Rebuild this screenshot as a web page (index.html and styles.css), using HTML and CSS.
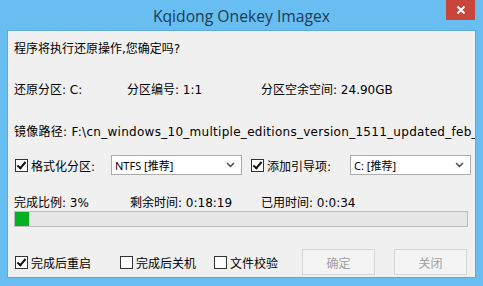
FILE: index.html
```html
<!doctype html>
<html>
	<head>
		<meta charset="UTF-8">
		<link rel="stylesheet" href="styles.css">
	</head>
	<body>
		<div class="window">
			<div class="titlebar">
				<span class="title">Kqidong Onekey Imagex</span>
				<div class="close">
					<svg width="10" height="10" viewBox="0 0 10 10"><path d="M1.5 1.5 L8.5 8.5 M8.5 1.5 L1.5 8.5" stroke="#fff" stroke-width="2"/></svg>
				</div>
			</div>

			<div class="panel">
				<div class="row r1">程序将执行还原操作,您确定吗?</div>

				<div class="row r2">
					<span class="c1">还原分区: C:</span>
					<span class="c2">分区编号: 1:1</span>
					<span>分区空余空间: 24.90GB</span>
				</div>

				<div class="row r3">镜像路径: F:\cn_windows_10_multiple_editions_version_1511_updated_feb_</div>

				<!-- format / boot options -->
				<div class="row r4">
					<span class="check on"></span>
					<span class="label-a">格式化分区:</span>
					<div class="select sel-a">
						<span>NTFS [推荐]</span>
						<svg width="9" height="6" viewBox="0 0 9 6"><path d="M1 1 L4.5 4.5 L8 1" fill="none" stroke="#444" stroke-width="1.4"/></svg>
					</div>
					<span class="check on"></span>
					<span class="label-b">添加引导项:</span>
					<div class="select sel-b">
						<span>C: [推荐]</span>
						<svg width="9" height="6" viewBox="0 0 9 6"><path d="M1 1 L4.5 4.5 L8 1" fill="none" stroke="#444" stroke-width="1.4"/></svg>
					</div>
				</div>

				<div class="row r5">
					<span class="p1">完成比例: 3%</span>
					<span class="p2">剩余时间: 0:18:19</span>
					<span>已用时间: 0:0:34</span>
				</div>
				<div class="progress"><div class="fill" style="width: 3%"></div></div>

				<div class="row r6">
					<span class="check on"></span>
					<span class="o1">完成后重启</span>
					<span class="check"></span>
					<span class="o2">完成后关机</span>
					<span class="check"></span>
					<span class="o3">文件校验</span>
					<button class="button b1" disabled>确定</button>
					<button class="button" disabled>关闭</button>
				</div>
			</div>
		</div>
	</body>
</html>
```

FILE: styles.css
```css
body {
	margin: 0;
	width: 483px;
	height: 286px;
	overflow: hidden;
	background-color: #68bef1;
	font-family: "DejaVu Sans", "Noto Sans CJK SC", sans-serif;
	font-size: 12px;
	color: #000;
}
.window {
	display: flex;
	flex-direction: column;
}
.titlebar {
	height: 31px;
	display: flex;
	justify-content: center;
	position: relative;
}
.title {
	margin-top: 5px;
	font-family: "Open Sans", sans-serif;
	font-size: 15.7px;
	color: #1d3b52;
}
.close {
	position: absolute;
	top: 0;
	left: 446px;
	width: 29px;
	height: 20px;
	background-color: #c9463d;
	display: flex;
	align-items: center;
	justify-content: center;
}
.panel {
	margin: 0 8px;
	height: 246px;
	background-color: #f0f0f0;
	box-shadow: 0 0 0 1px #5aa9da;
	padding-left: 6px;
	overflow: hidden;
}
.row {
	display: flex;
	align-items: center;
	white-space: nowrap;
}
.r1 { margin-top: 6px; height: 20px; }
.r2 { margin-top: 21px; height: 20px; }
.r3 { margin-top: 22px; height: 20px; letter-spacing: 0.28px; }
.r4 { margin-top: 15px; height: 20px; }
.r5 { margin-top: 17px; height: 18px; }
.r6 { margin-top: 22px; height: 26px; }

.c1 { width: 113px; }
.c2 { width: 134px; }
.p1 { width: 116px; }
.p2 { width: 131px; }

.check {
	flex: none;
	width: 11px;
	height: 11px;
	border: 1px solid #333;
	background-color: #fff;
	margin-left: 1px;
	margin-right: 3px;
	position: relative;
}
.check.on::after {
	content: "";
	position: absolute;
	left: 3px;
	top: 0px;
	width: 3px;
	height: 7px;
	border: solid #111;
	border-width: 0 2px 2px 0;
	transform: rotate(40deg);
}
.label-a { width: 80px; }
.label-b { width: 83px; }
.select {
	flex: none;
	height: 18px;
	background-color: #fff;
	border: 1px solid #acacac;
	display: flex;
	align-items: center;
	justify-content: space-between;
	padding: 0 6px 0 3px;
	font-family: "Noto Sans", "Noto Sans CJK SC", sans-serif;
	font-size: 11px;
}
.sel-a { width: 120px; margin-right: 8px; }
.sel-b { width: 110px; }

.progress {
	margin-top: 1px;
	width: 452px;
	height: 14px;
	border: 1px solid #bcbcbc;
	background-color: #e6e6e6;
}
.progress .fill {
	height: 100%;
	background-color: #06b025;
}

.o1 { width: 88px; }
.o2 { width: 77px; }
.o3 { width: 72px; }
.button {
	flex: none;
	width: 73px;
	height: 26px;
	background-color: #f4f4f4;
	border: 1px solid #d5d5d5;
	color: #a0a0a0;
	font-family: "Noto Sans CJK SC", sans-serif;
	font-size: 12px;
	padding: 0;
}
.b1 { margin-right: 19px; }
```
